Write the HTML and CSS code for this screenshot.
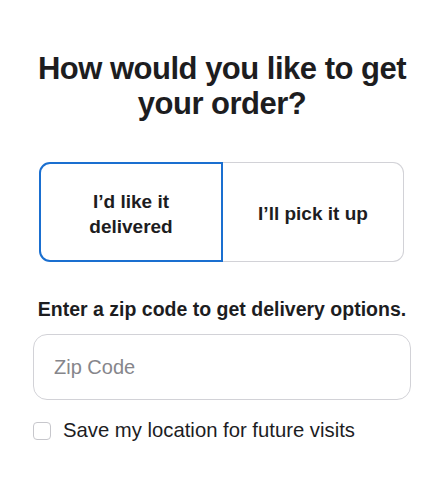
FILE: index.html
```html
<!DOCTYPE html>
<html lang="en">
<head>
    <meta charset="UTF-8">
    <meta name="viewport" content="width=device-width, initial-scale=1.0">
    <title>Delivery options</title>
    <link rel="stylesheet" href="styles.css">
</head>
<body>
    <div class="container">
        <h2>How would you like to get your order?</h2>

        <div class="toggle">
            <button class="option selected">I’d like it<br>delivered</button>
            <button class="option">I’ll pick it up</button>
        </div>

        <p class="hint">Enter a zip code to get delivery options.</p>

        <input type="text" class="zip" placeholder="Zip Code">

        <label class="save">
            <input type="checkbox">
            <span>Save my location for future visits</span>
        </label>
    </div>
</body>
</html>
```

FILE: styles.css
```css
body {
    font-family: "Liberation Sans", Arial, sans-serif;
    background-color: #fff;
    color: #1d1d1f;
    margin: 0;
}

.container {
    padding: 0 33px;
}

h2 {
    font-size: 31px;
    line-height: 35px;
    font-weight: bold;
    letter-spacing: -0.5px;
    text-align: center;
    margin: 51px -10px 41px;
}

.toggle {
    display: flex;
    margin: 0 7px 0 6px;
    height: 100px;
}

.option {
    flex: 1;
    font-family: inherit;
    font-size: 19px;
    font-weight: bold;
    line-height: 25px;
    color: #1d1d1f;
    background: #fff;
    border: 1px solid #d2d2d7;
    padding-top: 4px;
    cursor: pointer;
}

.option:first-child {
    border-radius: 11px 0 0 11px;
    border-right: none;
}

.option:last-child {
    border-radius: 0 11px 11px 0;
    border-left: none;
}

.option.selected {
    border: 2px solid #1a6fd0;
}

.hint {
    font-size: 19.5px;
    font-weight: bold;
    text-align: center;
    margin: 36px -6px 13px;
}

.zip {
    display: block;
    box-sizing: border-box;
    width: 100%;
    height: 66px;
    padding: 0 20px;
    font-family: inherit;
    font-size: 20px;
    border: 1px solid #d2d2d7;
    border-radius: 14px;
}

.zip::placeholder {
    color: #86868b;
}

.save {
    display: flex;
    align-items: center;
    gap: 12px;
    margin-top: 19px;
    font-size: 20.3px;
}

.save input {
    appearance: none;
    width: 18px;
    height: 18px;
    margin: 0;
    border: 1px solid #c7c7cc;
    border-radius: 4px;
}
```
